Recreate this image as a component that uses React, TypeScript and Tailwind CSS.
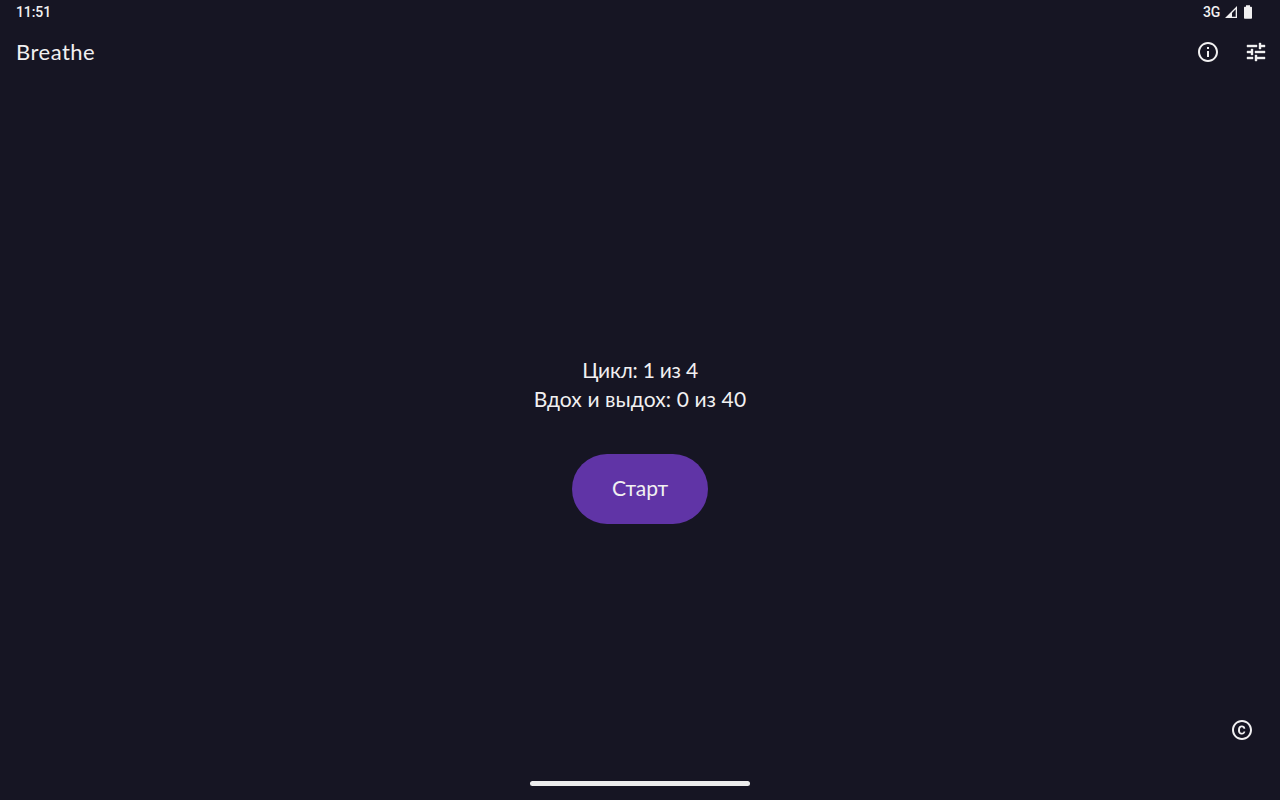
import { MdCopyright, MdInfoOutline } from "react-icons/md";

function TuneIcon() {
  return (
    <svg width="24" height="24" viewBox="0 0 24 24" aria-hidden="true">
      <path
        d="M3 17v2h6v-2H3zM3 5v2h10V5H3zm10 16v-2h8v-2h-8v-2h-2v6h2zM7 9v2H3v2h4v2h2V9H7zm14 4v-2H11v2h10zm-6-4h2V7h4V5h-4V3h-2v6z"
        fill="currentColor"
        stroke="currentColor"
        strokeWidth="0.4"
      />
    </svg>
  );
}

function StatusBar() {
  return (
    <div className="flex h-6 shrink-0 items-center justify-between pl-4 pr-[27px] font-['Roboto',sans-serif] text-sm font-medium leading-6">
      <span className="tracking-[-0.1px]">11:51</span>
      <div className="flex items-center">
        <span className="text-[14px] tracking-[-0.3px]">3G</span>
        <svg width="14" height="14" viewBox="0 0 14 14" className="ml-[4px]" aria-hidden="true">
          <path d="M13 1v12H1z M11.7 4.2L8 7.9v3.8h3.7z" fill="currentColor" fillRule="evenodd" />
        </svg>
        <svg width="10" height="14" viewBox="0 0 10 14" className="ml-[5px]" aria-hidden="true">
          <path d="M3 0.3h4v1.5h1.2q.8 0 .8.8v10.3q0 .8-.8.8H1.8q-.8 0-.8-.8V2.6q0-.8.8-.8H3z" fill="currentColor" />
        </svg>
      </div>
    </div>
  );
}

function AppBar() {
  return (
    <header className="flex h-14 shrink-0 items-center justify-between pl-4 pr-3">
      <h1 className="text-[22px] leading-7 tracking-[0.5px]">Breathe</h1>
      <div className="flex gap-6">
        <button type="button" aria-label="Info">
          <MdInfoOutline size={24} />
        </button>
        <button type="button" aria-label="Settings">
          <TuneIcon />
        </button>
      </div>
    </header>
  );
}

export default function App() {
  return (
    <div className="flex h-screen w-full flex-col overflow-hidden bg-[#161523] font-['Lato',sans-serif] text-[#f1f0f1]">
      <StatusBar />
      <AppBar />
      <main className="flex flex-1 flex-col items-center pt-[275px]">
        <p className="text-[21px] leading-[29px] tracking-[-0.25px]">Цикл: 1 из 4</p>
        <p className="text-[21px] leading-[29px] tracking-[0.1px]">Вдох и выдох: 0 из 40</p>
        <button
          type="button"
          className="mt-[41px] h-[70px] w-[136px] rounded-full bg-[#6034a6] pb-0.5 text-[21px] tracking-[-0.1px]"
        >
          Старт
        </button>
      </main>
      <footer className="flex shrink-0 flex-col">
        <button type="button" aria-label="Copyright" className="mr-[26px] self-end">
          <MdCopyright size={24} />
        </button>
        <div className="flex h-[58px] items-end justify-center pb-3.5">
          <div className="h-[5px] w-[220px] rounded-full bg-[#ececec]" />
        </div>
      </footer>
    </div>
  );
}
